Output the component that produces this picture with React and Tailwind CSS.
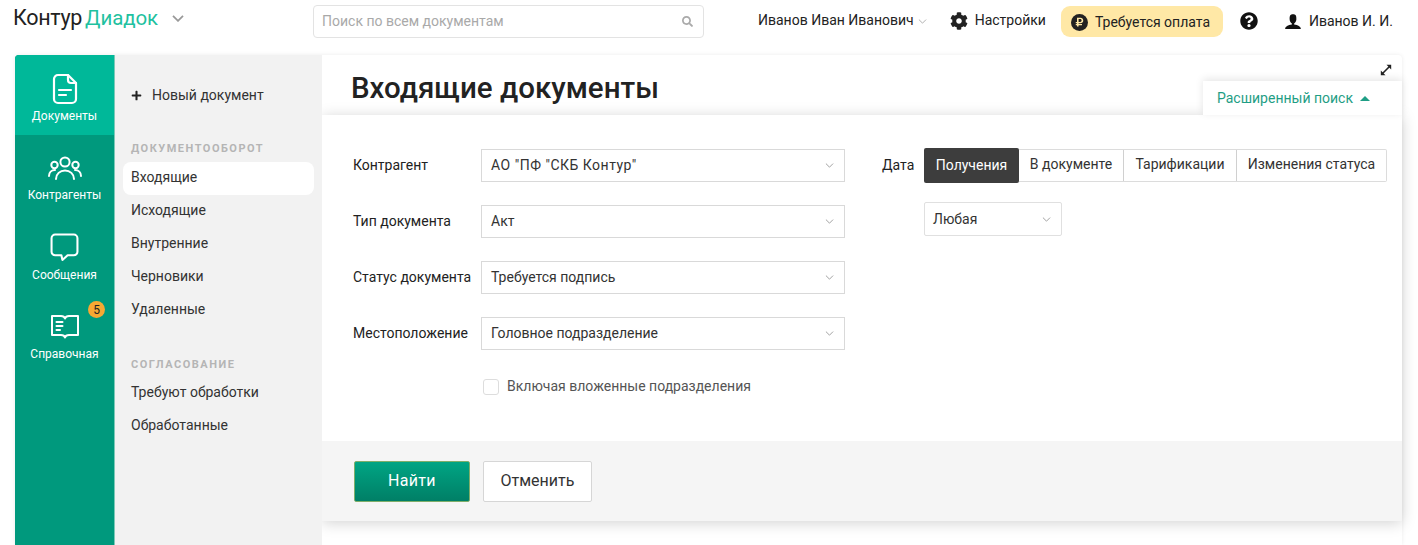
import React from "react";
import { FaCog, FaQuestionCircle, FaRubleSign, FaSearch, FaPlus } from "react-icons/fa";
import { ImUser } from "react-icons/im";

const Chevron = ({ className = "w-[9px] h-[5px] text-[#999]", width = "1.1" }) => (
  <svg viewBox="0 0 10 6" className={className} fill="none" stroke="currentColor" strokeWidth={width}>
    <path d="M0.7 0.7 5 5 9.3 0.7" />
  </svg>
);

const DocIcon = () => (
  <svg viewBox="0 0 26 32" className="w-[26px] h-[32px]" fill="none" stroke="white" strokeWidth="2.2" strokeLinejoin="round" strokeLinecap="round">
    <path d="M6 2h10l8 8v16a4 4 0 0 1-4 4H6a4 4 0 0 1-4-4V6a4 4 0 0 1 4-4z" />
    <path d="M16 2v5a3 3 0 0 0 3 3h5" />
    <path d="M7 17h12M7 22h7" />
  </svg>
);

const PeopleIcon = () => (
  <svg viewBox="0 0 34 24" className="w-[34px] h-[24px]" fill="none" stroke="white" strokeWidth="2" strokeLinecap="round">
    <circle cx="17" cy="6" r="4.6" />
    <circle cx="6.500" cy="9" r="3.2" />
    <circle cx="27.500" cy="9" r="3.2" />
    <path d="M8 23c0-5 4-8.500 9-8.500s9 3.500 9 8.500" />
    <path d="M1 20c0-3.500 2.500-6 6-6M33 20c0-3.500-2.500-6-6-6" />
  </svg>
);

const MessageIcon = () => (
  <svg viewBox="0 0 28 28" className="w-[29px] h-[29px]" fill="none" stroke="white" strokeWidth="2" strokeLinejoin="round">
    <path d="M5 1.500h18a3.500 3.500 0 0 1 3.500 3.500v13a3.500 3.500 0 0 1-3.500 3.500h-6l-5 4.500-1-4.500H5A3.500 3.500 0 0 1 1.500 18V5A3.500 3.500 0 0 1 5 1.500z" />
  </svg>
);

const BookIcon = () => (
  <svg viewBox="0 0 30 26" className="w-[30px] h-[27px]" fill="none" stroke="white" strokeWidth="2" strokeLinejoin="round" strokeLinecap="round">
    <path d="M2 2.500h9c2 0 3.500 1 4 2.500.5-1.500 2-2.500 4-2.500h9v19h-9c-2 0-3.500.7-4 2.500-.5-1.800-2-2.500-4-2.500H2z" />
    <path d="M6.500 8.500h6M6.500 12.500h6M6.500 16.500h3.500" />
  </svg>
);

const ExpandIcon = () => (
  <svg viewBox="0 0 12 12" className="w-[12px] h-[12px]" fill="none" stroke="#222" strokeWidth="1.6">
    <path d="M2.500 9.500 9.500 2.500" />
    <path d="M6.500 0.800h4.700v4.700z" fill="#222" stroke="none" />
    <path d="M0.800 6.500v4.700h4.700z" fill="#222" stroke="none" />
  </svg>
);

const railItems = [
  { label: "Контрагенты", icon: <PeopleIcon />, h: "h-[79px]", pt: "pt-[21px]", gap: "mt-[7px]" },
  { label: "Сообщения", icon: <MessageIcon />, h: "h-[80px]", pt: "pt-[19px]", gap: "mt-[5px]" },
];

const FormRow = ({ label, value, valueClass = "" }) => (
  <div className="flex items-center h-[33px] mb-[23px]">
    <div className="w-[128px] text-[14px] text-[#222]">{label}</div>
    <div className="w-[364px] h-[33px] border border-[#d9d9d9] flex items-center justify-between pl-[9px] pr-[10px] text-[14px] text-[#333]">
      <span className={valueClass}>{value}</span>
      <Chevron />
    </div>
  </div>
);

const NavLink = ({ children, active }) => (
  <div
    className={
      "h-[33px] flex items-center pl-[8px] pb-[2px] mx-[8px] rounded-[8px] text-[14px] text-[#333] " +
      (active ? "bg-white" : "")
    }
  >
    {children}
  </div>
);

const NavTitle = ({ children }) => (
  <div className="pl-[16px] text-[11px] font-bold tracking-[1.5px] text-[#b5b5b5] h-[16px] leading-[16px]">{children}</div>
);

export default function App() {
  return (
    <div className="w-[1418px] h-[545px] overflow-hidden bg-white font-['Roboto',sans-serif]">
      <header className="h-[55px] flex items-start relative">
        <div className="w-[313px] flex items-center pl-[13px] pt-[6px]">
          <span className="text-[21.5px] leading-[24px] text-[#222] tracking-[-0.3px]">Контур</span>
          <span className="text-[20.5px] leading-[24px] text-[#1fc1a0] ml-[3px] tracking-[-0.1px]">Диадок</span>
          <Chevron className="w-[12px] h-[7px] text-[#999] ml-[14px]" width="1.5" />
        </div>
        <div className="mt-[5px] w-[391px] h-[33px] border border-[#e3e3e3] rounded-[4px] flex items-center justify-between pl-[8px] pr-[10px]">
          <span className="text-[14px] text-[#a9a9a9]">Поиск по всем документам</span>
          <FaSearch className="w-[11px] h-[11px] text-[#aaa]" />
        </div>
        <div className="flex items-center ml-[54px] mt-[6px] h-[31px] text-[14px] text-[#222]">
          <span className="pb-[2px]">Иванов Иван Иванович</span>
          <Chevron className="w-[9px] h-[5px] text-[#aaa] ml-[4px]" />
          <FaCog className="w-[18px] h-[18px] text-[#222] ml-[23px] mb-[2px]" />
          <span className="ml-[7px] pb-[2px]">Настройки</span>
          <div className="ml-[15px] h-[31px] w-[162px] rounded-[9px] bg-[#ffe8a6] flex items-center pl-[10px] pt-[1px]">
            <span className="w-[17px] h-[17px] rounded-full bg-[#222] flex items-center justify-center">
              <FaRubleSign className="w-[9px] h-[10px] text-[#ffe8a6]" />
            </span>
            <span className="ml-[7px]">Требуется оплата</span>
          </div>
          <FaQuestionCircle className="w-[18px] h-[18px] text-[#111] ml-[17px] mb-[2px]" />
          <ImUser className="w-[18px] h-[18px] text-[#111] ml-[26px] mb-[1px]" />
          <span className="ml-[7px]">Иванов И. И.</span>
        </div>
      </header>

      <div className="flex ml-[15px] w-[1387px] h-[490px] shadow-[0_0_4px_rgba(0,0,0,0.08)] rounded-t-[4px]">
        <aside className="w-[99px] bg-[#00997d] flex flex-col items-center text-white text-[12px] rounded-tl-[4px] overflow-hidden">
          <div className="w-full h-[80px] bg-[#00b899] flex flex-col items-center pt-[18px]">
            <DocIcon />
            <div className="mt-[3px] leading-[16px]">Документы</div>
          </div>
          {railItems.map((item) => (
            <div key={item.label} className={"w-full flex flex-col items-center " + item.h + " " + item.pt}>
              {item.icon}
              <div className={"leading-[16px] " + item.gap}>{item.label}</div>
            </div>
          ))}
          <div className="w-full flex flex-col items-center pt-[19px] relative">
            <BookIcon />
            <div className="leading-[16px] mt-[6px]">Справочная</div>
            <span className="absolute left-[73px] top-[7px] w-[17px] h-[17px] rounded-full bg-[#f7a833] text-[#222] text-[12px] flex items-center justify-center">
              5
            </span>
          </div>
        </aside>

        <nav className="w-[208px] bg-[#f2f2f2] border-l border-[#7cc9b8]">
          <div className="flex items-center pl-[16px] pt-[24px] h-[56px] text-[14px] text-[#333]">
            <FaPlus className="w-[11px] h-[11px] text-[#222]" />
            <span className="ml-[10px]">Новый документ</span>
          </div>
          <div className="mt-[30px] mb-[5px]">
            <NavTitle>ДОКУМЕНТООБОРОТ</NavTitle>
          </div>
          <NavLink active>Входящие</NavLink>
          <NavLink>Исходящие</NavLink>
          <NavLink>Внутренние</NavLink>
          <NavLink>Черновики</NavLink>
          <NavLink>Удаленные</NavLink>
          <div className="mt-[30px] mb-[4px]">
            <NavTitle>СОГЛАСОВАНИЕ</NavTitle>
          </div>
          <NavLink>Требуют обработки</NavLink>
          <NavLink>Обработанные</NavLink>
        </nav>

        <main className="w-[1080px] relative">
          <div className="h-[60px] pl-[29px] pt-[16px]">
            <h1 className="text-[29.5px] leading-[34px] font-medium text-[#222]">Входящие документы</h1>
          </div>
          <div className="absolute right-[10px] top-[9px]">
            <ExpandIcon />
          </div>
          <div className="absolute right-0 top-[26px] w-[199px] h-[34px] bg-white shadow-[0_-2px_8px_rgba(0,0,0,0.1)] flex items-center pl-[14px] text-[14px] text-[#1f9e85] z-10">
            Расширенный поиск
            <span className="ml-[7px] w-0 h-0 border-x-[5px] border-x-transparent border-b-[5px] border-b-[#1f9e85]"></span>
          </div>

          <div className="h-[406px] bg-white shadow-[0_2px_14px_rgba(0,0,0,0.18)] [clip-path:inset(-20px_-20px_-20px_0)] flex flex-col">
            <div className="h-[326px] flex pt-[34px] pl-[31px]">
              <div className="w-[529px]">
                <FormRow label="Контрагент" value={'АО "ПФ "СКБ Контур"'} valueClass="tracking-[0.5px]" />
                <FormRow label="Тип документа" value="Акт" />
                <FormRow label="Статус документа" value="Требуется подпись" />
                <FormRow label="Местоположение" value="Головное подразделение" />
                <div className="flex items-center ml-[130px] mt-[26px]">
                  <span className="w-[16px] h-[16px] border border-[#ddd] rounded-[3px]"></span>
                  <span className="ml-[8px] text-[14px] text-[#555]">Включая вложенные подразделения</span>
                </div>
              </div>
              <div>
                <div className="flex items-center -mt-[1px]">
                  <span className="w-[42px] text-[14px] text-[#222]">Дата</span>
                  <div className="flex items-center text-[14px] text-[#333]">
                    <div className="h-[35px] w-[95px] bg-[#3d3d3d] text-white rounded-[2px] flex items-center justify-center">
                      Получения
                    </div>
                    <div className="h-[33px] flex items-start border border-l-0 border-[#dcdcdc] rounded-r-[2px]">
                      <div className="h-full w-[105px] flex items-center justify-center border-r border-[#d0d0d0] pb-[3px]">В документе</div>
                      <div className="h-full w-[113px] flex items-center justify-center border-r border-[#d0d0d0] pb-[3px]">Тарификации</div>
                      <div className="h-full w-[149px] flex items-center justify-center pb-[3px]">Изменения статуса</div>
                    </div>
                  </div>
                </div>
                <div className="ml-[42px] mt-[19px] w-[138px] h-[34px] border border-[#e0e0e0] rounded-[2px] flex items-center justify-between pl-[8px] pr-[10px] text-[14px] text-[#333]">
                  Любая
                  <Chevron />
                </div>
              </div>
            </div>
            <div className="h-[80px] bg-[#f5f5f5] flex items-center pl-[32px]">
              <button className="w-[116px] h-[41px] rounded-[2px] border border-[#7fae6a] bg-gradient-to-b from-[#00a584] to-[#007f66] text-white text-[16px] tracking-[0.3px]">
                Найти
              </button>
              <button className="ml-[13px] w-[109px] h-[41px] rounded-[2px] border border-[#d6d6d6] bg-white text-[#333] text-[16px]">
                Отменить
              </button>
            </div>
          </div>
        </main>
      </div>
    </div>
  );
}
